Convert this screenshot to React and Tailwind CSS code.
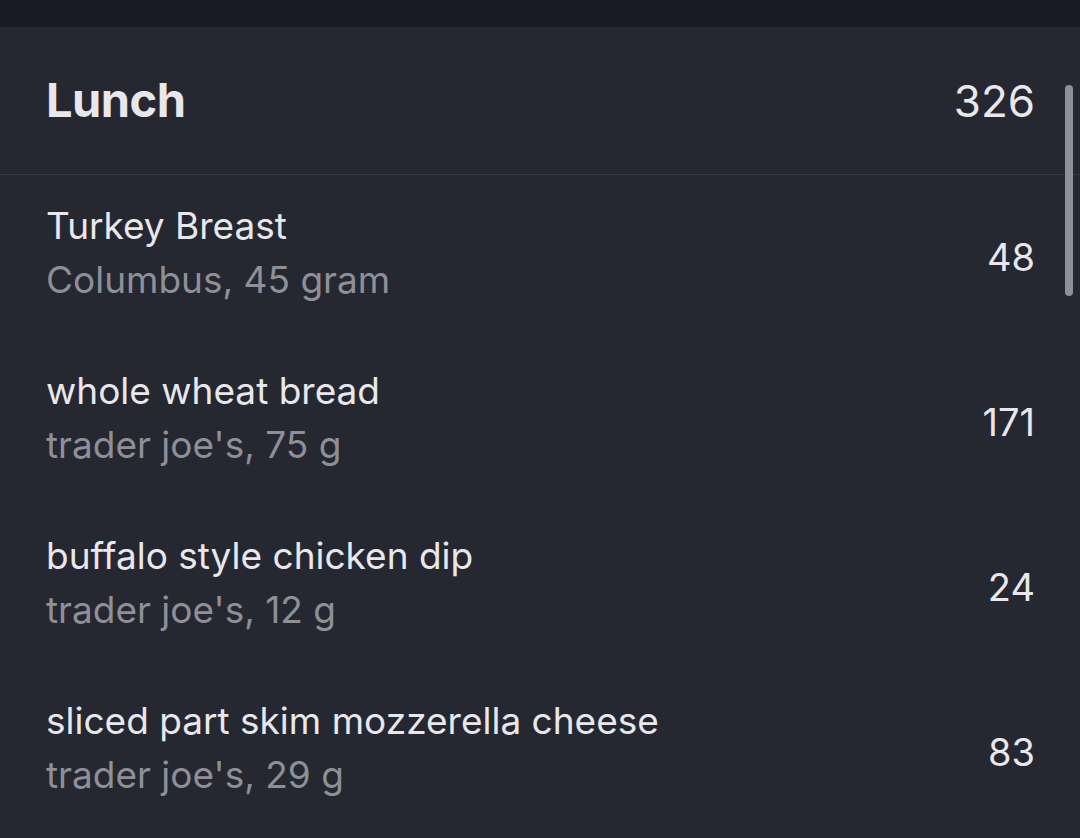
export default function App() {
  const items = [
    { name: "Turkey Breast", sub: "Columbus, 45 gram", cal: 48 },
    { name: "whole wheat bread", sub: "trader joe's, 75 g", cal: 171 },
    { name: "buffalo style chicken dip", sub: "trader joe's, 12 g", cal: 24 },
    { name: "sliced part skim mozzerella cheese", sub: "trader joe's, 29 g", cal: 83 },
  ];
  return (
    <div
      className="relative w-[1080px] h-[838px] overflow-hidden bg-[#252731]"
      style={{ fontFamily: "Inter, 'Noto Sans', sans-serif" }}
    >
      <div className="h-[27px] bg-[#181a25]" />
      <div className="h-[148px] flex items-center justify-between pl-[46px] pr-[45px] border-b border-[#363843]">
        <span className="text-[47px] font-bold text-[#e8e8ec] tracking-[-0.5px]">Lunch</span>
        <span className="text-[44px] text-[#e8e8ec]">326</span>
      </div>
      {items.map((it) => (
        <div key={it.name} className="h-[165px] flex items-center justify-between pl-[46px] pr-[45px]">
          <div className="flex flex-col pb-[9px]">
            <span className="text-[37px] leading-[54px] text-[#e8e8ec]">{it.name}</span>
            <span className="text-[37px] leading-[54px] text-[#8e8f97]">{it.sub}</span>
          </div>
          <span className="text-[38px] text-[#e8e8ec]">{it.cal}</span>
        </div>
      ))}
      <div className="absolute left-[1065px] top-[85px] w-[8px] h-[211px] rounded-full bg-[#8e8f98]" />
    </div>
  );
}
